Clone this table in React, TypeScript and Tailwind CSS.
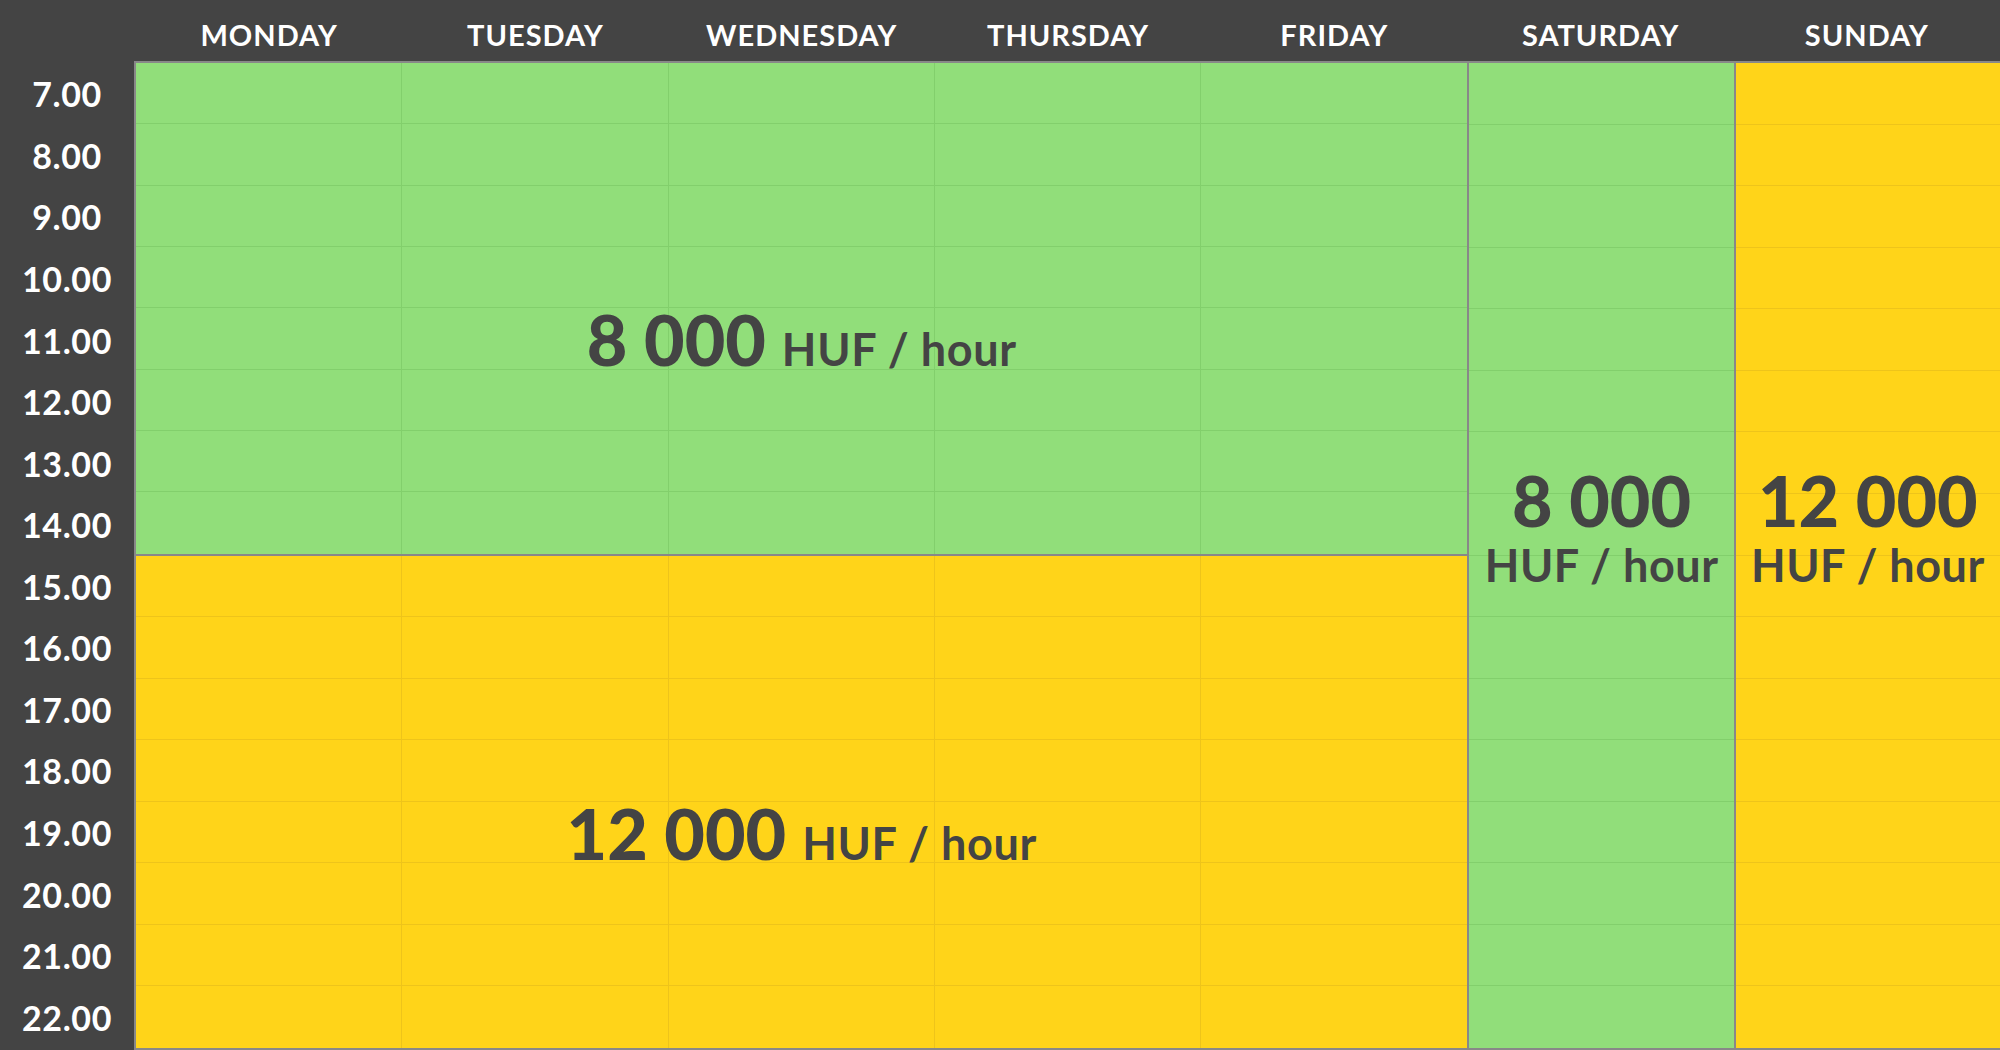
import type React from "react"

const days = ["MONDAY", "TUESDAY", "WEDNESDAY", "THURSDAY", "FRIDAY", "SATURDAY", "SUNDAY"]
const hours = Array.from({ length: 16 }, (_, i) => `${i + 7}.00`)

type Tone = "green" | "yellow"

const toneBg: Record<Tone, string> = {
  green: "bg-[#91de7a]",
  yellow: "bg-[#ffd419]",
}

const toneLine: Record<Tone, string> = {
  green: "border-[#82cf6c]",
  yellow: "border-[#eec41a]",
}

interface BlockProps {
  tone: Tone
  cols: 1 | 5
  rows: 8 | 16
  className?: string
  children?: React.ReactNode
}

// coloured price block with the faint hour/day lines drawn as cells
const Block: React.FC<BlockProps> = ({ tone, cols, rows, className, children }) => {
  const gridCls = `${cols === 5 ? "grid-cols-5" : "grid-cols-1"} ${rows === 8 ? "grid-rows-8" : "grid-rows-16"}`
  return (
    <div className={`grid min-h-0 ${toneBg[tone]} ${className ?? ""}`}>
      <div className={`col-start-1 row-start-1 grid ${gridCls}`}>
        {Array.from({ length: cols * rows }, (_, i) => {
          const lastCol = (i + 1) % cols === 0
          const lastRow = i >= cols * (rows - 1)
          return (
            <div
              key={i}
              className={`${lastCol ? "" : "border-r"} ${lastRow ? "" : "border-b"} ${toneLine[tone]}`}
            />
          )
        })}
      </div>
      <div className="col-start-1 row-start-1 flex items-center justify-center text-[#444444]">{children}</div>
    </div>
  )
}

const Price: React.FC<{ amount: string }> = ({ amount }) => (
  <div className="flex items-baseline gap-4 pt-[62px]">
    <span className="text-[70px] font-black leading-none">{amount}</span>
    <span className="text-[45px] font-bold leading-none tracking-[0.6px]">HUF / hour</span>
  </div>
)

const StackedPrice: React.FC<{ amount: string }> = ({ amount }) => (
  <div className="flex flex-col items-center pb-[58px]">
    <span className="text-[70px] font-black leading-none">{amount}</span>
    <span className="mt-[8px] text-[45px] font-bold leading-none tracking-[0.5px]">HUF / hour</span>
  </div>
)

export default function App() {
  return (
    <div
      className="flex h-[1050px] w-[2000px] overflow-hidden bg-[#444444]"
      style={{ fontFamily: "Lato, 'Open Sans', sans-serif" }}
    >
      <div className="flex w-[134px] flex-col">
        <div className="h-[61px]" />
        <div className="grid flex-1 grid-rows-16 pt-[2px] pb-[2px]">
          {hours.map((h) => (
            <div key={h} className="flex items-center justify-center text-[34px] font-bold tracking-[0.6px] text-white">
              {h}
            </div>
          ))}
        </div>
      </div>

      <div className="flex flex-1 flex-col">
        <div className="grid h-[61px] grid-cols-7 pl-[2px]">
          {days.map((d) => (
            <div key={d} className="flex items-center justify-center pt-[8px] text-[29px] font-bold tracking-[1px] text-white">
              {d}
            </div>
          ))}
        </div>

        <div className="grid flex-1 grid-cols-7 grid-rows-16 border-y-2 border-l-2 border-[#888888]">
          <Block tone="green" cols={5} rows={8} className="col-span-5 row-span-8 border-b-2 border-[#888888]">
            <Price amount="8 000" />
          </Block>
          <Block tone="yellow" cols={5} rows={8} className="col-span-5 row-span-8">
            <Price amount="12 000" />
          </Block>
          <Block tone="green" cols={1} rows={16} className="col-start-6 row-span-16 row-start-1 border-l-2 border-[#888888]">
            <StackedPrice amount="8 000" />
          </Block>
          <Block tone="yellow" cols={1} rows={16} className="col-start-7 row-span-16 row-start-1 border-l-2 border-[#888888]">
            <StackedPrice amount="12 000" />
          </Block>
        </div>
      </div>
    </div>
  )
}
